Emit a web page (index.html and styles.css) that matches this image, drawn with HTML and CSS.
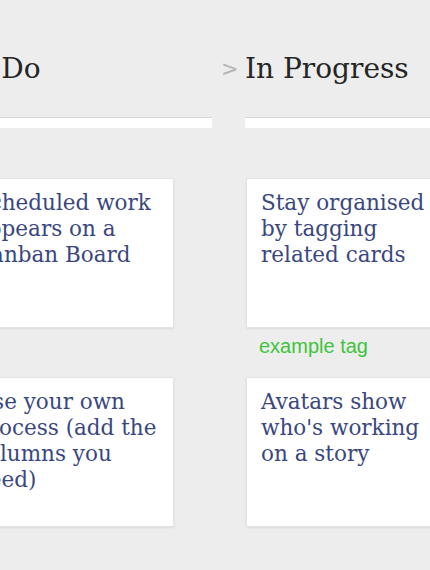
FILE: index.html
```html
<!DOCTYPE html>
<html lang="en">
<head>
<meta charset="utf-8">
<title>Kanban Board</title>
<link rel="stylesheet" href="styles.css">
</head>
<body>
<div class="board">
  <section class="column">
    <h2 class="col-title">To Do</h2>
    <div class="col-bar"></div>
    <div class="slot">
      <div class="card">Scheduled work appears on a Kanban Board</div>
      <div class="tag-area"></div>
    </div>
    <div class="slot">
      <div class="card">Use your own process (add the columns you need)</div>
      <div class="tag-area"></div>
    </div>
  </section>
  <section class="column">
    <h2 class="col-title"><span class="chev">&gt;</span>In Progress</h2>
    <div class="col-bar"></div>
    <div class="slot">
      <div class="card">Stay organised by tagging related cards</div>
      <div class="tag-area"><span class="tag">example tag</span></div>
    </div>
    <div class="slot">
      <div class="card">Avatars show who's working on a story</div>
      <div class="tag-area"></div>
    </div>
  </section>
</div>
</body>
</html>
```

FILE: styles.css
```css
html, body {
  margin: 0;
  padding: 0;
  background: #ededed;
  overflow: hidden;
}

.board {
  display: grid;
  grid-template-columns: 253px 253px;
  column-gap: 33px;
  margin-left: -41px;
  width: 600px;
}

.column {
  display: flex;
  flex-direction: column;
}

.col-title {
  margin: 0;
  padding-top: 51px;
  height: 36px;
  line-height: 36px;
  font-family: "DejaVu Serif", serif;
  font-weight: normal;
  font-size: 28px;
  color: #252525;
  white-space: nowrap;
}

.chev {
  display: inline-block;
  width: 24px;
  margin-left: -24px;
  font-family: "DejaVu Sans", sans-serif;
  font-size: 21px;
  color: #b5b5b5;
  vertical-align: 2px;
}

.col-bar {
  margin-top: 30px;
  height: 10px;
  background: #fff;
  border-top: 1px solid #d6d6d6;
}

.slot {
  display: flex;
  flex-direction: column;
}

.col-bar + .slot {
  margin-top: 50px;
}

.card {
  box-sizing: border-box;
  margin-left: 1px;
  width: 214px;
  height: 150px;
  padding: 11px 10px 0 14px;
  background: #fff;
  border: 1px solid #e3e3e3;
  box-shadow: 0 1px 2px rgba(0, 0, 0, 0.08);
  font-family: "DejaVu Serif", serif;
  font-size: 21.5px;
  line-height: 26px;
  color: #3a4780;
}

.tag-area {
  height: 49px;
  padding-left: 14px;
}

.tag {
  display: block;
  margin-top: 7px;
  font-family: "Liberation Sans", Arial, sans-serif;
  font-size: 20px;
  line-height: 22px;
  color: #3ec43c;
}
```
